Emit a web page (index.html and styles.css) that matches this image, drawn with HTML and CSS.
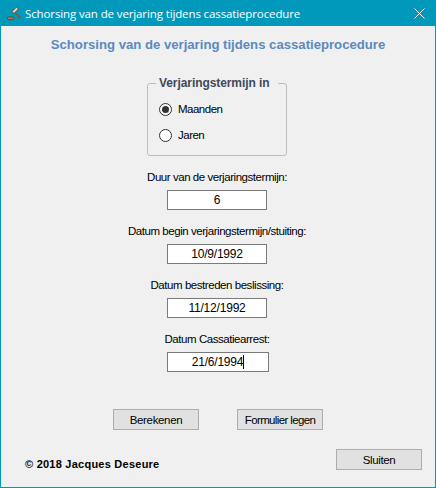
FILE: index.html
```html
<!DOCTYPE html>
<html lang="nl">
<head>
  <meta charset="UTF-8">
  <title>Schorsing van de verjaring tijdens cassatieprocedure</title>
  <link rel="stylesheet" href="styles.css">
</head>
<body>

  <div class="window">
    <div class="titlebar">
      <svg class="app-icon" width="16" height="16" viewBox="0 0 16 16">
        <path d="M8.5 7.5 L14 12.5" stroke="#8a5a2e" stroke-width="2" stroke-linecap="round"/>
        <path d="M6 6.5 L10.5 2 L12.5 4 L8 8.5 Z" fill="#e2d6c6" stroke="#5d4632" stroke-width="1"/>
        <rect x="1.5" y="12" width="6.5" height="2.6" rx="1" fill="#b07a4e" stroke="#5d3c22" stroke-width="0.8"/>
      </svg>
      <span class="title-text">Schorsing van de verjaring tijdens cassatieprocedure</span>
      <svg class="close-icon" width="11" height="11" viewBox="0 0 11 11">
        <path d="M0.5 0.5 L10.5 10.5 M10.5 0.5 L0.5 10.5" stroke="#fff" stroke-width="1"/>
      </svg>
    </div>

    <div class="content">
      <h1 class="heading">Schorsing van de verjaring tijdens cassatieprocedure</h1>

      <fieldset class="group">
        <legend>Verjaringstermijn in</legend>
        <div class="radio-row"><span class="radio checked"></span>Maanden</div>
        <div class="radio-row"><span class="radio"></span>Jaren</div>
      </fieldset>

      <div class="field-label">Duur van de verjaringstermijn:</div>
      <div class="field">6</div>

      <div class="field-label">Datum begin verjaringstermijn/stuiting:</div>
      <div class="field">10/9/1992</div>

      <div class="field-label">Datum bestreden beslissing:</div>
      <div class="field">11/12/1992</div>

      <div class="field-label">Datum Cassatiearrest:</div>
      <div class="field wide"><span class="caret">21/6/1994</span></div>

      <div class="actions">
        <button>Berekenen</button>
        <button class="tight">Formulier legen</button>
      </div>

      <div class="footer">
        <span class="copyright">© 2018 Jacques Deseure</span>
        <button>Sluiten</button>
      </div>
    </div>
  </div>

</body>
</html>
```

FILE: styles.css
```css
* {
  box-sizing: border-box;
}

body {
  margin: 0;
  padding: 0;
  background-color: #f0f0f0;
  font-family: "Liberation Sans", Arial, sans-serif;
  font-size: 11.5px;
  color: #000;
}

.window {
  width: 436px;
  height: 488px;
  display: flex;
  flex-direction: column;
  border: 1px solid #0099bc;
  border-top: none;
}

.titlebar {
  height: 26px;
  flex: none;
  background-color: #0099bc;
  color: white;
  display: flex;
  align-items: center;
  padding: 0 10px 0 5px;
}

.app-icon {
  flex: none;
  margin-right: 3px;
}

.title-text {
  font-family: "Open Sans", sans-serif;
  font-size: 11.5px;
  letter-spacing: -0.12px;
  flex: 1;
}

.content {
  flex: 1;
  display: flex;
  flex-direction: column;
  align-items: center;
  padding-right: 2px;
}

.heading {
  margin: 11px 0 0 2px;
  font-size: 13.15px;
  line-height: 15px;
  font-weight: bold;
  color: #5a8ac0;
  text-align: center;
}

.group {
  width: 140px;
  height: 80px;
  margin: 24px 0 0;
  padding: 12px 0 0 11px;
  border: 1px solid #bdbdbd;
  border-radius: 3px;
}

.group legend {
  padding: 0 9px 0 3px;
  margin-left: -3px;
  font-size: 12px;
  font-weight: bold;
  letter-spacing: -0.08px;
  color: #3f4a5a;
  line-height: 14px;
}

.radio-row {
  display: flex;
  align-items: center;
  height: 14px;
  margin-bottom: 12px;
  letter-spacing: -0.5px;
}

.radio {
  width: 13px;
  height: 13px;
  margin-right: 6px;
  border: 1px solid #333;
  border-radius: 50%;
  background: white;
  display: flex;
  align-items: center;
  justify-content: center;
}

.radio.checked::after {
  content: "";
  width: 7px;
  height: 7px;
  border-radius: 50%;
  background: #333;
}

.field-label {
  margin-top: 14px;
  line-height: 14px;
  letter-spacing: -0.45px;
  text-align: center;
}

.field {
  width: 100px;
  height: 20px;
  margin-top: 6px;
  border: 1px solid #7a7a7a;
  background: white;
  font-size: 12px;
  letter-spacing: -0.2px;
  text-align: center;
  line-height: 18px;
}

.field.wide {
  width: 102px;
  margin-right: -2px;
}

.caret {
  border-right: 1px solid #000;
}

.actions {
  width: 210px;
  margin: 37px 0 0 2px;
  display: flex;
  justify-content: space-between;
}

button {
  width: 86px;
  height: 21px;
  padding: 0;
  border: 1px solid #adadad;
  background-color: #e1e1e1;
  font-family: "Liberation Sans", Arial, sans-serif;
  font-size: 11.5px;
  letter-spacing: -0.35px;
  color: #000;
}

button.tight {
  letter-spacing: -0.63px;
}

.footer {
  align-self: stretch;
  margin: 19px -2px 0 0;
  padding: 0 13px 0 24px;
  display: flex;
  justify-content: space-between;
  align-items: flex-start;
}

.copyright {
  margin-top: 9px;
  font-size: 11px;
  font-weight: bold;
  letter-spacing: 0.24px;
}
```
